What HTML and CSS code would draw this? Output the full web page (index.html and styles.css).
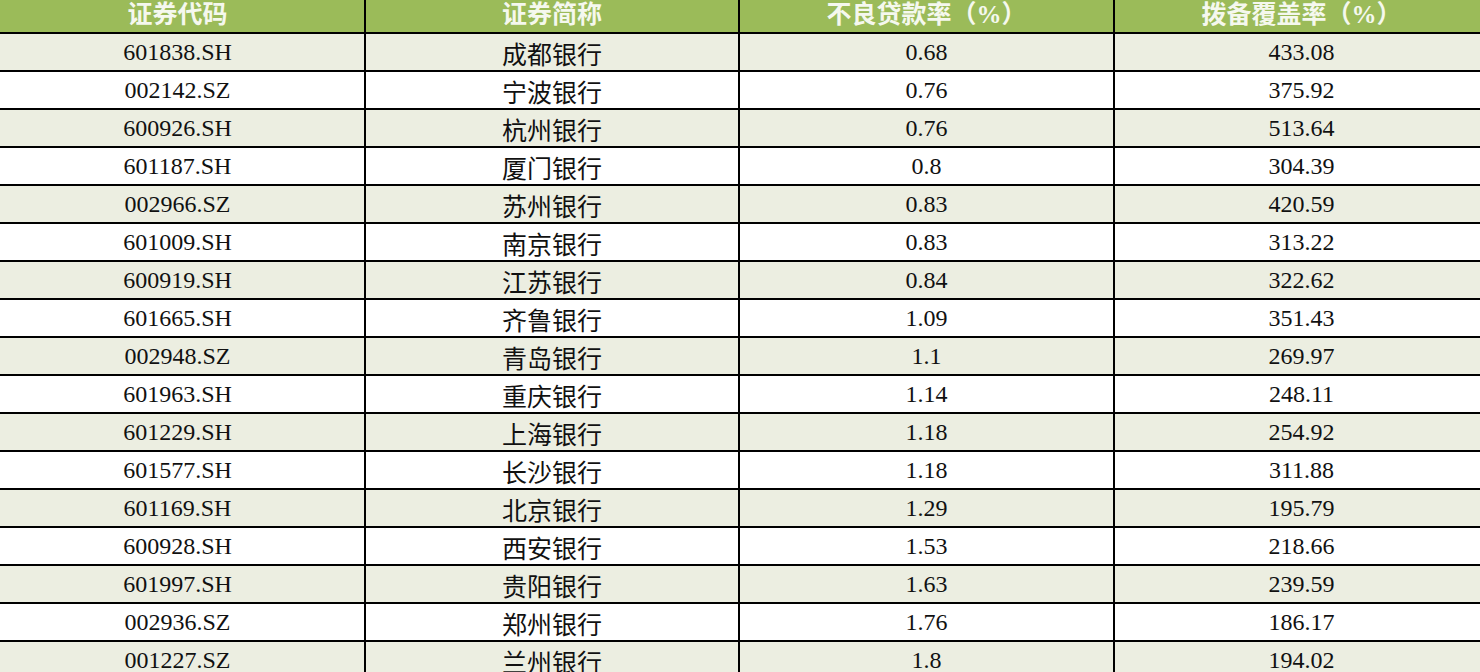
FILE: index.html
```html
<!DOCTYPE html>
<html lang="zh-CN">
<head>
<meta charset="utf-8">
<title>城商行不良贷款率与拨备覆盖率</title>
<link rel="stylesheet" href="styles.css">
</head>
<body>
<div class="sheet">
  <div class="row head">
    <div class="cell">证券代码</div>
    <div class="cell">证券简称</div>
    <div class="cell">不良贷款率（%）</div>
    <div class="cell">拨备覆盖率（%）</div>
  </div>
  <div class="row tint"><div class="cell">601838.SH</div><div class="cell cjk">成都银行</div><div class="cell">0.68</div><div class="cell">433.08</div></div>
  <div class="row"><div class="cell">002142.SZ</div><div class="cell cjk">宁波银行</div><div class="cell">0.76</div><div class="cell">375.92</div></div>
  <div class="row tint"><div class="cell">600926.SH</div><div class="cell cjk">杭州银行</div><div class="cell">0.76</div><div class="cell">513.64</div></div>
  <div class="row"><div class="cell">601187.SH</div><div class="cell cjk">厦门银行</div><div class="cell">0.8</div><div class="cell">304.39</div></div>
  <div class="row tint"><div class="cell">002966.SZ</div><div class="cell cjk">苏州银行</div><div class="cell">0.83</div><div class="cell">420.59</div></div>
  <div class="row"><div class="cell">601009.SH</div><div class="cell cjk">南京银行</div><div class="cell">0.83</div><div class="cell">313.22</div></div>
  <div class="row tint"><div class="cell">600919.SH</div><div class="cell cjk">江苏银行</div><div class="cell">0.84</div><div class="cell">322.62</div></div>
  <div class="row"><div class="cell">601665.SH</div><div class="cell cjk">齐鲁银行</div><div class="cell">1.09</div><div class="cell">351.43</div></div>
  <div class="row tint"><div class="cell">002948.SZ</div><div class="cell cjk">青岛银行</div><div class="cell">1.1</div><div class="cell">269.97</div></div>
  <div class="row"><div class="cell">601963.SH</div><div class="cell cjk">重庆银行</div><div class="cell">1.14</div><div class="cell">248.11</div></div>
  <div class="row tint"><div class="cell">601229.SH</div><div class="cell cjk">上海银行</div><div class="cell">1.18</div><div class="cell">254.92</div></div>
  <div class="row"><div class="cell">601577.SH</div><div class="cell cjk">长沙银行</div><div class="cell">1.18</div><div class="cell">311.88</div></div>
  <div class="row tint"><div class="cell">601169.SH</div><div class="cell cjk">北京银行</div><div class="cell">1.29</div><div class="cell">195.79</div></div>
  <div class="row"><div class="cell">600928.SH</div><div class="cell cjk">西安银行</div><div class="cell">1.53</div><div class="cell">218.66</div></div>
  <div class="row tint"><div class="cell">601997.SH</div><div class="cell cjk">贵阳银行</div><div class="cell">1.63</div><div class="cell">239.59</div></div>
  <div class="row"><div class="cell">002936.SZ</div><div class="cell cjk">郑州银行</div><div class="cell">1.76</div><div class="cell">186.17</div></div>
  <div class="row tint"><div class="cell">001227.SZ</div><div class="cell cjk">兰州银行</div><div class="cell">1.8</div><div class="cell">194.02</div></div>
</div>
</body>
</html>
```

FILE: styles.css
```css
html, body {
  margin: 0;
  padding: 0;
  overflow: hidden;
  background: #ffffff;
}

.sheet {
  margin-left: -9px;
  width: 1497px;
  font-family: "Liberation Serif", "Noto Sans CJK SC", serif;
  font-size: 24px;
  color: #111111;
}

.row {
  display: grid;
  grid-template-columns: 375px 374px 375px 373px;
  height: 38px;
  box-sizing: border-box;
  border-bottom: 2px solid #000000;
  background: #ffffff;
}

.row.tint {
  background: #eceee1;
}

.row.head {
  height: 34px;
  background: #9bbb59;
  color: #f5f8ee;
  font-family: "Liberation Serif", "Noto Sans CJK SC", serif;
  font-weight: 700;
  font-size: 25px;
}

.cell {
  display: flex;
  align-items: center;
  justify-content: center;
  box-sizing: border-box;
  border-right: 2px solid #000000;
  line-height: 1;
  white-space: nowrap;
}

.cell:last-child {
  border-right: none;
}

.head .cell {
  line-height: 30px;
  padding-bottom: 2px;
}

.cjk {
  font-family: "Noto Sans CJK SC", sans-serif;
  font-size: 25px;
  padding-top: 3px;
}
```
